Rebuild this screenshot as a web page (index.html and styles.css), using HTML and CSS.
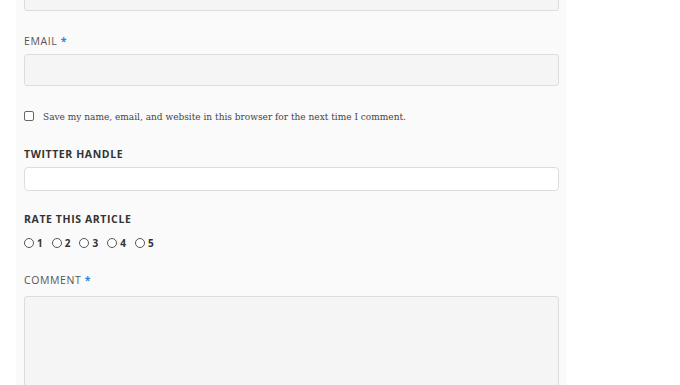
FILE: index.html
```html
<!DOCTYPE html>
<html lang="en">
<head>
  <meta charset="UTF-8">
  <title>Leave a Reply</title>
  <link rel="stylesheet" href="styles.css">
</head>
<body>
  <form class="comment-form">
    <div class="field field-top">
      <input class="text-input" type="text">
    </div>

    <div class="field">
      <label class="field-label" for="email">Email <span class="required">*</span></label>
      <input class="text-input" id="email" type="email">
    </div>

    <div class="consent">
      <input class="check" id="consent" type="checkbox">
      <label for="consent">Save my name, email, and website in this browser for the next time I comment.</label>
    </div>

    <div class="field">
      <label class="field-label strong" for="twitter">Twitter Handle</label>
      <input class="text-input light" id="twitter" type="text">
    </div>

    <div class="field field-rating">
      <div class="field-label strong">Rate This Article</div>
      <div class="rating">
        <label><input class="radio" type="radio" name="rating" value="1">1</label>
        <label><input class="radio" type="radio" name="rating" value="2">2</label>
        <label><input class="radio" type="radio" name="rating" value="3">3</label>
        <label><input class="radio" type="radio" name="rating" value="4">4</label>
        <label><input class="radio" type="radio" name="rating" value="5">5</label>
      </div>
    </div>

    <div class="field">
      <label class="field-label comment-label" for="comment">Comment <span class="required">*</span></label>
      <textarea class="text-input comment-box" id="comment"></textarea>
    </div>
  </form>
</body>
</html>
```

FILE: styles.css
```css
html, body {
  margin: 0;
  padding: 0;
  background: #fff;
  overflow: hidden;
}
body {
  font-family: "Open Sans", "DejaVu Sans", sans-serif;
  color: #333;
}
.comment-form {
  width: 535px;
  margin: -21px 0 0 16px;
  padding: 0 7px 40px 8px;
  background: #fafafa;
}
.field { margin-bottom: 20px; }
.field-top { margin-bottom: 22px; }
.field-rating { margin-bottom: 21px; }
.field-label {
  display: block;
  font-size: 10.5px;
  line-height: 16px;
  letter-spacing: 0.6px;
  text-transform: uppercase;
  color: #555;
  margin-bottom: 5px;
}
.field-label.strong { font-weight: 700; color: #333; }
.comment-label { margin-bottom: 8px; }
.required { color: #2a86db; font-weight: 700; }
.text-input {
  display: block;
  box-sizing: border-box;
  width: 100%;
  height: 32px;
  margin: 0;
  border: 1px solid #ddd;
  border-radius: 3px;
  background: #f5f5f5;
  font: inherit;
}
.text-input.light {
  height: 24px;
  background: #fff;
  border-radius: 4px;
}
.comment-box {
  height: 160px;
  resize: none;
}
.consent {
  display: flex;
  align-items: center;
  height: 20px;
  margin-bottom: 20px;
  font-family: "DejaVu Serif", serif;
  font-stretch: condensed;
  font-size: 10px;
  color: #444;
}
.check {
  appearance: none;
  width: 10px;
  height: 10px;
  margin: 0 9px 0 0;
  border: 1px solid #666;
  border-radius: 2px;
  background: #fff;
}
.rating {
  display: flex;
  align-items: center;
  height: 16px;
  margin-top: 8px;
  gap: 8px;
  font-size: 10px;
  font-weight: 700;
  letter-spacing: 1px;
}
.rating label {
  display: flex;
  align-items: center;
}
.radio {
  appearance: none;
  width: 10px;
  height: 10px;
  margin: 0 3px 0 0;
  border: 1px solid #555;
  border-radius: 50%;
  background: #fff;
}
```
